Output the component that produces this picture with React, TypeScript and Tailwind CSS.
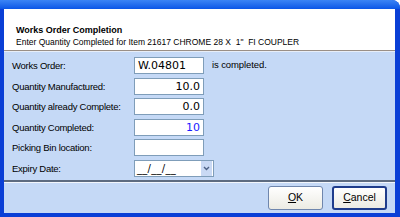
import React from "react";

const font = { fontFamily: '"Liberation Sans", Tahoma, Arial, sans-serif' };
const valFont = { fontFamily: '"DejaVu Sans", Verdana, sans-serif' };

function Row({ label, children }: { label: string; children: React.ReactNode }) {
  return (
    <div className="flex items-center h-[17px]">
      <div className="w-[130px] pl-[8px] text-[9.5px] tracking-[-0.25px] text-black leading-[13px] whitespace-nowrap">
        {label}
      </div>
      {children}
    </div>
  );
}

function Box({ value, right, blue, w = 70 }: { value?: string; right?: boolean; blue?: boolean; w?: number }) {
  return (
    <div
      className={`h-[17px] bg-white border border-[#7f9db9] flex items-center px-[3px] text-[11px] leading-[15px] ${
        right ? "justify-end" : "justify-start"
      } ${blue ? "text-[#1a1aff]" : "text-black"}`}
      style={{ width: w, ...valFont }}
    >
      {value}
    </div>
  );
}

export default function App() {
  return (
    <div style={font} className="w-[400px] h-[217px] flex flex-col bg-[#0a3fd6] rounded-tr-[8px] overflow-hidden">
      <div className="h-[9px] bg-gradient-to-b from-[#3b84f5] to-[#0a55e6] shrink-0" />
      <div className="flex-1 flex flex-col ml-[4px] mr-[5px] mb-[4px] min-h-0">
        <div className="h-[41px] bg-white pl-[12px] pt-[15px] shrink-0">
          <div className="text-[9px] font-bold leading-[12px] text-black">Works Order Completion</div>
          <div className="text-[8.5px] leading-[13px] text-black whitespace-pre">
            Enter Quantity Completed for Item 21617 CHROME 28 X  1"  FI COUPLER
          </div>
        </div>
        <div className="h-[1px] bg-[#9a8f86] shrink-0" />
        <div className="h-[1px] bg-[#e8eef8] shrink-0" />
        <div className="flex-1 bg-[#c5d9f6] flex flex-col">
          <div className="flex flex-col gap-[3.6px] pt-[5px]">
            <Row label="Works Order:">
              <Box value="W.04801" />
              <span className="ml-[8px] text-[9.5px] tracking-[-0.1px] text-black">is completed.</span>
            </Row>
            <Row label="Quantity Manufactured:">
              <Box value="10.0" right />
            </Row>
            <Row label="Quantity already Complete:">
              <Box value="0.0" right />
            </Row>
            <Row label="Quantity Completed:">
              <Box value="10" right blue />
            </Row>
            <Row label="Picking Bin location:">
              <Box />
            </Row>
            <Row label="Expiry Date:">
              <div className="w-[80px] h-[17px] bg-white border border-[#7f9db9] flex items-center">
                <span style={valFont} className="flex-1 pl-[2px] text-[10px] leading-[13px] text-black tracking-[0.3px]">
                  __/__/__
                </span>
                <div className="w-[11px] h-[15px] bg-[#c9d9f4] flex items-center justify-center mr-[1px]">
                  <svg width="7" height="5" viewBox="0 0 7 5">
                    <path d="M1 1 L3.5 3.5 L6 1" stroke="#4d6185" strokeWidth="1.4" fill="none" />
                  </svg>
                </div>
              </div>
            </Row>
          </div>
          <div className="mt-[3px] h-[2px] bg-[#5d6b80]" />
          <div className="h-[1px] bg-[#f2f6fc]" />
          <div className="flex justify-end gap-[9px] pt-[3px] pr-[8px]">
            <button className="w-[55px] h-[24px] rounded-[3px] border border-[#6f86ad] bg-gradient-to-b from-[#ffffff] to-[#ecebe3] text-[10.5px] text-black">
              <span className="underline">O</span>K
            </button>
            <button className="w-[55px] h-[24px] rounded-[3px] border-[2px] border-[#1e3c8c] bg-gradient-to-b from-[#ffffff] to-[#ecebe3] text-[10.5px] text-black">
              <span className="underline">C</span>ancel
            </button>
          </div>
        </div>
      </div>
    </div>
  );
}
